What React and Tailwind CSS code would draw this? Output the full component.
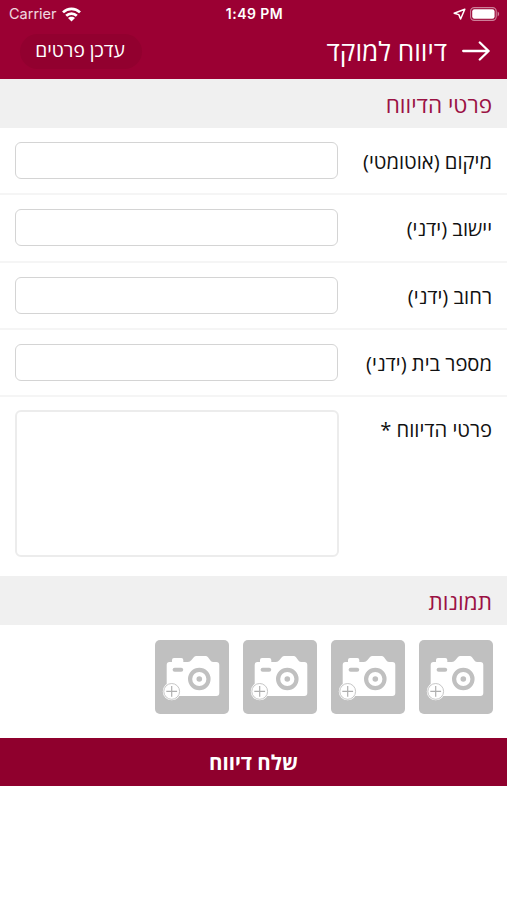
import React, { useState } from 'react';

const fields = [
  { id: 'location', label: 'מיקום (אוטומטי)' },
  { id: 'city', label: 'יישוב (ידני)' },
  { id: 'street', label: 'רחוב (ידני)' },
  { id: 'house', label: 'מספר בית (ידני)' },
];

const StatusBar = () => (
  <div dir="ltr" className="grid h-7 grid-cols-3 items-center pl-[9px] pr-[7px] font-['Inter',sans-serif] text-white">
    <div className="flex items-center gap-[5px]">
      <span className="text-[14.5px] leading-none text-white/85">Carrier</span>
      <svg width="19" height="15" viewBox="0 0 19 15" fill="none" stroke="white" strokeWidth="2.7">
        <path d="M1 5.4C5.8 0.7 13.2 0.7 18 5.4" />
        <path d="M4.2 8.8C7.2 5.9 11.8 5.9 14.8 8.8" />
        <path d="M9.5 14.4L6 11.1C7.9 9.3 11.1 9.3 13 11.1Z" fill="white" stroke="none" />
      </svg>
    </div>
    <span className="text-center text-[14px] leading-none font-semibold tracking-[0.45px]">1:49 PM</span>
    <div className="flex items-center justify-end gap-[4px]">
      <svg width="13" height="12" viewBox="0 0 13 12" fill="none" stroke="white" strokeWidth="1.5" strokeLinejoin="round">
        <path d="M11.8 1.2L1.2 5.2L5.8 6.6L7.6 11Z" />
      </svg>
      <svg width="30" height="14" viewBox="0 0 30 14">
        <rect x="0.6" y="0.6" width="25.6" height="12.8" rx="3.6" fill="none" stroke="white" strokeOpacity="0.5" strokeWidth="1.1" />
        <rect x="2.2" y="2.2" width="22.4" height="9.6" rx="2.2" fill="white" />
        <path d="M27.6 4.6C29.6 5.4 29.6 8.6 27.6 9.4Z" fill="white" fillOpacity="0.5" />
      </svg>
    </div>
  </div>
);

const CameraIcon = () => (
  <svg width="74" height="74" viewBox="0 0 74 74">
    <path
      d="M11.7 25Q11.7 22 14.5 22H17V20Q17 18 19 18H26.3Q28.3 18 28.3 20V22H33Q35 22 36.5 20L38.8 17.2Q39.8 16 41.5 16H50.5Q52 16 53 17.2L55.4 20.4Q56.6 22 58.5 22H61.3Q64.3 22 64.3 25V53Q64.3 56 61.3 56H14.7Q11.7 56 11.7 53Z"
      fill="white"
    />
    <rect x="17.6" y="27.8" width="10.6" height="4" rx="2" fill="#c0c0c0" />
    <circle cx="44.3" cy="39" r="9.2" fill="white" stroke="#c0c0c0" strokeWidth="4.2" />
    <circle cx="44.3" cy="39" r="2.8" fill="#c0c0c0" />
    <circle cx="16.7" cy="51.4" r="8.9" fill="white" />
    <circle cx="16.7" cy="51.4" r="7.9" fill="white" stroke="#c0c0c0" strokeWidth="0.9" />
    <path d="M16.7 46V56.8M11.3 51.4H22.1" stroke="#b0b0b0" strokeWidth="1.2" />
  </svg>
);

const SectionTitle = ({ children }) => (
  <h2 className="flex h-[49px] items-center bg-[#f0f0f0] px-[15px] pt-[3px] text-[22.5px] leading-none text-[#9b1244]">
    {children}
  </h2>
);

const App = () => {
  const [values, setValues] = useState({});

  const handleChange = (id, value) => {
    setValues(current => ({ ...current, [id]: value }));
  };

  return (
    <div dir="rtl" className="min-h-screen w-full bg-white font-['Open_Sans','Noto_Sans',sans-serif] text-[#111111]">
      <header className="h-[79px] bg-[#9b0033]">
        <StatusBar />
        <div className="flex h-[46px] items-center justify-between pr-[17px] pl-5">
          <div className="flex items-center gap-[15px]">
            <svg width="28" height="20" viewBox="0 0 28 20" fill="none" stroke="white" strokeWidth="2.3" strokeLinecap="round" strokeLinejoin="round">
              <path d="M1.2 10H26.6M17.8 1.5L26.6 10L17.8 18.5" />
            </svg>
            <h1 className="pt-px text-[26.2px] leading-none text-white">דיווח למוקד</h1>
          </div>
          <button className="h-[35px] w-[122px] rounded-full bg-[#92002f] pr-0.5 pb-0.5 text-[19.2px] leading-none text-white">
            עדכן פרטים
          </button>
        </div>
      </header>

      <SectionTitle>פרטי הדיווח</SectionTitle>

      {fields.map(field => (
        <div key={field.id} className="flex h-[67.25px] items-center justify-between border-b-2 border-[#f5f5f5] px-[15px]">
          <label htmlFor={field.id} className="pt-px text-[20.2px] leading-none">{field.label}</label>
          <input
            id={field.id}
            value={values[field.id] || ''}
            onChange={(e) => handleChange(field.id, e.target.value)}
            className="h-[37px] w-[323px] rounded-md border-[1.5px] border-[#d4d4d4] px-2"
          />
        </div>
      ))}

      <div className="flex h-[179px] items-start justify-between px-[15px] pt-[13px]">
        <label htmlFor="details" className="pt-[9px] text-[20.2px] leading-none">פרטי הדיווח *</label>
        <textarea
          id="details"
          value={values.details || ''}
          onChange={(e) => handleChange('details', e.target.value)}
          className="h-[147px] w-[324px] resize-none rounded-md border-2 border-[#ececec] px-2"
        />
      </div>

      <SectionTitle>תמונות</SectionTitle>

      <div className="flex h-[113px] gap-[14px] px-[14.5px] pt-[15px]">
        {[1, 2, 3, 4].map(n => (
          <button key={n} className="h-[74px] w-[74px] overflow-hidden rounded-[5px] bg-[#c0c0c0]">
            <CameraIcon />
          </button>
        ))}
      </div>

      <button className="h-12 w-full bg-[#8f002d] pt-px text-[20.5px] leading-none font-bold text-white">
        שלח דיווח
      </button>
    </div>
  );
};

export default App;
